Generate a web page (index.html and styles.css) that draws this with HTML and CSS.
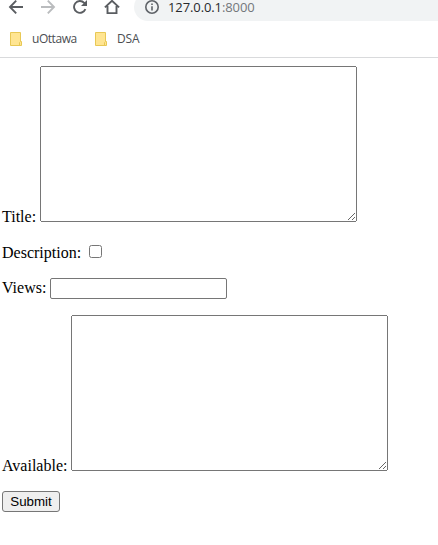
FILE: index.html
```html
<!DOCTYPE html>
<html lang="en">
<head>
<meta charset="utf-8">
<title>127.0.0.1:8000</title>
<link rel="stylesheet" href="styles.css">
</head>
<body>
<header class="browser">
  <div class="toolbar">
    <svg class="nav" viewBox="0 0 16 16"><path d="M15 8H2.5M8.2 1.7L2 8l6.2 6.3"/></svg>
    <svg class="nav disabled" viewBox="0 0 16 16"><path d="M1 8h12.5M7.8 1.7L14 8l-6.2 6.3"/></svg>
    <svg class="nav" viewBox="0 0 16 16"><path d="M13.4 10.2A5.9 5.9 0 1 1 12.2 3.8L13.6 5.2"/><path class="solid" d="M15 1v6H9z"/></svg>
    <svg class="nav" viewBox="0 0 16 16"><path d="M.9 8.4L8 1.8l7.1 6.6M3.5 7v7.1h9V7"/></svg>
    <div class="address">
      <svg class="info" viewBox="0 0 16 16"><circle cx="8" cy="8" r="6.2"/><path d="M8 7.2v4.2M8 4.5v1.6"/></svg>
      <div class="url">127.0.0.1<span class="port">:8000</span></div>
    </div>
  </div>
  <nav class="bookmarks">
    <span class="bookmark ottawa"><svg class="folder" viewBox="0 0 12 14"><path d="M.5.5h10v9h1v4H.5z"/><path d="M9.5 13.5v-3l1-1"/></svg><span class="name">uOttawa</span></span>
    <span class="bookmark"><svg class="folder" viewBox="0 0 12 14"><path d="M.5.5h10v9h1v4H.5z"/><path d="M9.5 13.5v-3l1-1"/></svg><span class="name">DSA</span></span>
  </nav>
</header>
<form class="form">
  <p><label for="title">Title:</label> <textarea id="title"></textarea></p>
  <p><label for="description">Description:</label> <input type="checkbox" id="description"></p>
  <p><label for="views">Views:</label> <input type="text" class="views" id="views"></p>
  <p><label for="available">Available:</label> <textarea id="available"></textarea></p>
  <button type="button">Submit</button>
</form>
</body>
</html>
```
FILE: styles.css
```css
body {
  margin: 0;
  background: #fff;
  color: #000;
  font: 16px "Liberation Serif", serif;
  overflow: hidden;
}
.browser {
  height: 57px;
  overflow: hidden;
  border-bottom: 1px solid #d9dadc;
  font-family: "Open Sans", "Noto Sans", sans-serif;
}
.toolbar {
  display: flex;
  align-items: center;
  gap: 16px;
  height: 28px;
  margin-top: -7px;
  padding-left: 8px;
}
.nav {
  flex: none;
  width: 16px;
  height: 16px;
  fill: none;
  stroke: #5a5d61;
  stroke-width: 1.9;
}
.nav.disabled { stroke: #babcbe; }
.nav .solid { fill: #5a5d61; stroke: none; }
.address {
  display: flex;
  align-items: center;
  flex: 1;
  height: 28px;
  margin-left: -2px;
  padding-left: 10px;
  border-radius: 14px 0 0 14px;
  background: #f1f3f4;
}
.info {
  width: 16px;
  height: 16px;
  margin-right: 8px;
  fill: none;
  stroke: #5f6368;
  stroke-width: 1.6;
}
.url {
  font-size: 13px;
  line-height: 14px;
  letter-spacing: -0.1px;
  color: #27292c;
}
.port { color: #74777b; }
.bookmarks {
  display: flex;
  align-items: center;
  height: 36px;
  padding-left: 10px;
}
.bookmark {
  display: flex;
  align-items: center;
  gap: 10px;
}
.ottawa { width: 85px; }
.ottawa .name { letter-spacing: -0.45px; }
.folder {
  width: 12px;
  height: 14px;
  fill: #ffe592;
  stroke: #e8c855;
}
.name {
  font-size: 12px;
  line-height: 16px;
  letter-spacing: -0.2px;
  color: #4b4e52;
}
.form { padding: 8px 2px 0; }
p { margin: 0 0 16px; }
textarea {
  box-sizing: border-box;
  width: 317px;
  height: 156px;
}
.views {
  box-sizing: border-box;
  width: 177px;
  height: 21px;
  border: 1px solid #767676;
  border-radius: 2px;
}
button {
  box-sizing: border-box;
  display: block;
  width: 58px;
  height: 21px;
  padding: 0;
  border: 1px solid #767676;
  border-radius: 3px;
  background: #efefef;
  color: #000;
  font: 13.333px "Liberation Sans", sans-serif;
}
```
